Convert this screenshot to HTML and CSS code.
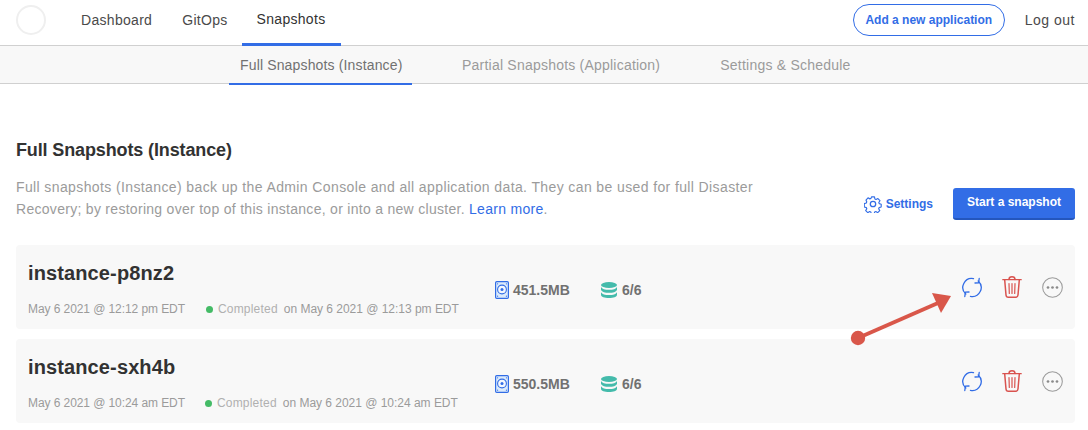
FILE: index.html
```html
<!DOCTYPE html>
<html lang="en">
<head>
<meta charset="utf-8">
<title>Snapshots</title>
<link rel="stylesheet" href="styles.css">
</head>
<body>
<svg width="0" height="0" class="defs">
  <defs>
    <symbol id="disk" viewBox="0 0 14 18">
      <rect x="0.6" y="0.6" width="12.8" height="16.8" rx="1.2" fill="#dcebfb" stroke="#326de6" stroke-width="1.2"/>
      <circle cx="7" cy="8.500" r="4.400" fill="#f4f8fe" stroke="#326de6" stroke-width="1.100"/>
      <circle cx="7" cy="8.500" r="1.500" fill="#326de6"/>
      <circle cx="2.600" cy="2.800" r=".6" fill="#326de6"/><circle cx="11.400" cy="2.800" r=".6" fill="#326de6"/>
      <circle cx="2.600" cy="15.200" r=".6" fill="#326de6"/><circle cx="11.400" cy="15.200" r=".6" fill="#326de6"/>
    </symbol>
    <symbol id="db" viewBox="0 0 16 16">
      <ellipse cx="8" cy="3" rx="8" ry="3" fill="#44bbab"/>
      <path d="M0 5c1 2 4 2.800 8 2.800S15 7 16 5v3c-1 2-4 2.800-8 2.800S1 10 0 8z" fill="#44bbab"/>
      <path d="M0 10.200c1 2 4 2.800 8 2.800s7-.8 8-2.800V13c0 1.700-3.600 3-8 3s-8-1.300-8-3z" fill="#44bbab"/>
    </symbol>
    <symbol id="restore" viewBox="0 0 20 20">
      <g fill="none" stroke="#326de6" stroke-width="1.300" stroke-linecap="round" stroke-linejoin="round">
        <path d="M3.800 16.600A9 9 0 0 1 11.500 1.100"/>
        <path d="M16.200 3.400A9 9 0 0 1 8.500 18.900"/>
        <path d="M13 5.500L16.600 5.300 17.200 1"/>
        <path d="M7 14.500L3.400 14.700 2.800 19"/>
      </g>
    </symbol>
    <symbol id="trash" viewBox="0 0 20 22">
      <g fill="none" stroke="#d9534f" stroke-width="1.500" stroke-linecap="round" stroke-linejoin="round">
        <path d="M.8 3.700h18.400" stroke-width="1.300"/>
        <path d="M7 3.500c0-2 1-2.700 3-2.700s3 .7 3 2.700"/>
        <path d="M2.700 4l1.300 15c.1 1.300 1 2.200 2.300 2.200h7.400c1.300 0 2.200-.9 2.300-2.200L17.300 4"/>
        <path d="M7 7.500l.3 10M10 7.500v10M13 7.500l-.3 10" stroke-width="1.200"/>
      </g>
    </symbol>
    <symbol id="more" viewBox="0 0 22 22">
      <circle cx="11" cy="11" r="10.300" fill="none" stroke="#9b9b9b" stroke-width="1.100"/>
      <circle cx="6.300" cy="11" r="1.400" fill="#8a8a8a"/><circle cx="11" cy="11" r="1.400" fill="#8a8a8a"/><circle cx="15.700" cy="11" r="1.400" fill="#8a8a8a"/>
    </symbol>
  </defs>
</svg>

<header class="topbar">
  <div class="logo"></div>
  <nav class="mainnav">
    <a class="mainlink">Dashboard</a>
    <a class="mainlink">GitOps</a>
    <a class="mainlink active">Snapshots</a>
  </nav>
  <div class="topright">
    <a class="addapp">Add a new application</a>
    <a class="logout">Log out</a>
  </div>
</header>

<nav class="subnav">
  <a class="sublink active">Full Snapshots (Instance)</a>
  <a class="sublink">Partial Snapshots (Application)</a>
  <a class="sublink">Settings &amp; Schedule</a>
</nav>

<main class="content">
  <h1 class="title">Full Snapshots (Instance)</h1>
  <div class="intro">
    <p class="desc"><span class="line-one">Full snapshots (Instance) back up the Admin Console and all application data. They can be used for full Disaster</span> <span class="line-two">Recovery; by restoring over top of this instance, or into a new cluster. <a class="learn">Learn more</a>.</span></p>
    <div class="actions">
      <a class="settings">
        <svg class="gear" viewBox="0 0 24 24" width="18" height="18" fill="none" stroke="#326de6" stroke-width="1.700" stroke-linejoin="round"><circle cx="12" cy="12" r="3.600"/><path d="M9.800 1.500h4.400l.6 3.100 1.700.8 2.800-1.500 3 3.200-1.700 2.700.6 1.700 3 .9v0l-.1 4.100-3 .8-.7 1.800 1.600 2.700-3.100 3-2.700-1.600-1.800.7-.7 3h-4.200l-.7-3-1.800-.7-2.700 1.600-3.100-3 1.600-2.700-.7-1.800-3-.8V11.400l3-.9.600-1.700L1.600 6.100l3-3.200 2.800 1.500 1.700-.8z" transform="translate(1.200 1.200) scale(.9)"/></svg>
        Settings
      </a>
      <a class="primary">Start a snapshot</a>
    </div>
  </div>

  <section class="card">
    <div class="info">
      <div class="name">instance-p8nz2</div>
      <div class="meta">
        <span class="date">May 6 2021 @ 12:12 pm EDT</span>
        <span class="status"><i class="dot"></i>Completed</span>
        <span class="ondate">on May 6 2021 @ 12:13 pm EDT</span>
      </div>
    </div>
    <div class="stats">
      <span class="stat size"><svg class="i-disk"><use href="#disk"/></svg>451.5MB</span>
      <span class="stat"><svg class="i-db"><use href="#db"/></svg>6/6</span>
    </div>
    <div class="icons">
      <svg class="i-restore"><use href="#restore"/></svg>
      <svg class="i-trash"><use href="#trash"/></svg>
      <svg class="i-more"><use href="#more"/></svg>
    </div>
  </section>

  <section class="card">
    <div class="info">
      <div class="name">instance-sxh4b</div>
      <div class="meta">
        <span class="date">May 6 2021 @ 10:24 am EDT</span>
        <span class="status"><i class="dot"></i>Completed</span>
        <span class="ondate">on May 6 2021 @ 10:24 am EDT</span>
      </div>
    </div>
    <div class="stats">
      <span class="stat size"><svg class="i-disk"><use href="#disk"/></svg>550.5MB</span>
      <span class="stat"><svg class="i-db"><use href="#db"/></svg>6/6</span>
    </div>
    <div class="icons">
      <svg class="i-restore"><use href="#restore"/></svg>
      <svg class="i-trash"><use href="#trash"/></svg>
      <svg class="i-more"><use href="#more"/></svg>
    </div>
  </section>
</main>

<svg class="arrow" width="120" height="70" viewBox="0 0 120 70">
  <circle cx="17" cy="57" r="7.200" fill="#d9574a"/>
  <path d="M17 57L97 22" stroke="#d9574a" stroke-width="4"/>
  <path d="M91 12L110 15 100 32z" fill="#d9574a"/>
</svg>
</body>
</html>
```
FILE: styles.css
```css
* { box-sizing: border-box; }
html, body { margin: 0; padding: 0; }
body {
  width: 1088px;
  height: 430px;
  overflow: hidden;
  background: #fff;
  font-family: "Liberation Sans", Arial, sans-serif;
  color: #323232;
  position: relative;
}
a { text-decoration: none; }
.defs { position: absolute; }

.topbar {
  height: 46px;
  border-bottom: 1px solid #d0d0d0;
  display: flex;
  align-items: stretch;
  padding: 0 13px 0 16px;
}
.logo {
  width: 30px;
  height: 30px;
  margin-top: 5px;
  border-radius: 50%;
  border: 2px solid #efefef;
  background: #fff;
}
.mainnav { display: flex; margin-left: 19px; }
.mainlink {
  font-size: 14px;
  letter-spacing: .3px;
  color: #4a4a4a;
  line-height: 41px;
  padding: 0 14px 0 16px;
  margin-bottom: -1px;
}
.mainlink.active {
  color: #323232;
  line-height: 39px;
  height: 46px;
  width: 99px;
  padding: 0 15px;
  border-bottom: 3px solid #326de6;
}
.topright { margin-left: auto; display: flex; align-items: flex-start; }
.addapp {
  margin-top: 4px;
  width: 152px;
  height: 32px;
  border: 1px solid #326de6;
  border-radius: 16px;
  color: #326de6;
  font-size: 12px;
  font-weight: bold;
  text-align: center;
  line-height: 31px;
}
.logout { margin-left: 20px; font-size: 14px; letter-spacing: .5px; color: #4a4a4a; line-height: 41px; }

.subnav {
  height: 38px;
  background: #f8f8f8;
  border-bottom: 1px solid #d0d0d0;
  display: flex;
  gap: 40px;
  padding-left: 229px;
}
.sublink {
  font-size: 14px;
  letter-spacing: .22px;
  color: #9b9b9b;
  line-height: 38px;
  padding: 0 10px;
  white-space: nowrap;
}
.sublink.active {
  color: #717171;
  width: 183px;
  padding: 0 0 0 11px;
  letter-spacing: .15px;
  height: 39px;
  border-bottom: 2px solid #326de6;
}

.content { padding: 0 13px 0 16px; }
.title {
  margin: 56px 0 0;
  font-size: 18px;
  letter-spacing: -.13px;
  line-height: 21px;
  font-weight: bold;
  color: #323232;
}
.intro {
  display: flex;
  justify-content: space-between;
  align-items: flex-end;
  margin-top: 15px;
}
.desc {
  margin: 0;
  width: 760px;
  font-size: 14px;
  line-height: 22px;
  color: #9b9b9b;
  white-space: nowrap;
}
.line-one { display: block; letter-spacing: .385px; }
.line-two { display: block; letter-spacing: .29px; }
.learn { color: #326de6; }
.actions { display: flex; align-items: center; }
.settings {
  display: flex;
  align-items: center;
  gap: 4px;
  color: #326de6;
  font-size: 12px;
  font-weight: bold;
}
.primary {
  margin-left: 20px;
  width: 122px;
  height: 32px;
  background: #326de6;
  border-bottom: 2px solid #2456bd;
  border-radius: 3px;
  color: #fff;
  font-size: 12px;
  font-weight: bold;
  text-align: center;
  line-height: 29px;
}

.card {
  height: 84px;
  margin-top: 10px;
  background: #f8f8f8;
  border-radius: 4px;
  padding: 0 12px;
  display: flex;
  align-items: stretch;
}
.intro + .card { margin-top: 25px; }
.info { width: 467px; flex: none; }
.name {
  margin-top: 16px;
  font-size: 20px;
  letter-spacing: .12px;
  line-height: 24px;
  font-weight: bold;
  color: #323232;
}
.meta {
  margin-top: 17px;
  display: flex;
  font-size: 12px;
  line-height: 15px;
  color: #9b9b9b;
  white-space: nowrap;
}
.date { letter-spacing: -.08px; }
.status { margin-left: 21px; letter-spacing: .2px; color: #b0b0b0; display: flex; align-items: center; }
.card + .card .status { margin-left: 20px; }
.dot {
  width: 7px;
  height: 7px;
  border-radius: 50%;
  background: #44bb66;
  margin-right: 5px;
}
.ondate { margin-left: 6px; letter-spacing: -.02px; }
.stats { display: flex; align-items: center; font-size: 14px; font-weight: bold; color: #717171; margin-top: 6px; }
.stat { display: flex; align-items: center; }
.size { width: 106px; }
.i-disk { width: 14px; height: 18px; margin-right: 4px; }
.i-db { width: 16px; height: 16px; margin-right: 5px; }
.icons { margin-left: auto; display: flex; align-items: center; }
.i-restore { width: 20px; height: 21px; }
.i-trash { width: 20px; height: 22px; margin-left: 20px; }
.i-more { width: 21px; height: 21px; margin-left: 20px; }

.arrow { position: absolute; left: 841px; top: 281px; }
```
